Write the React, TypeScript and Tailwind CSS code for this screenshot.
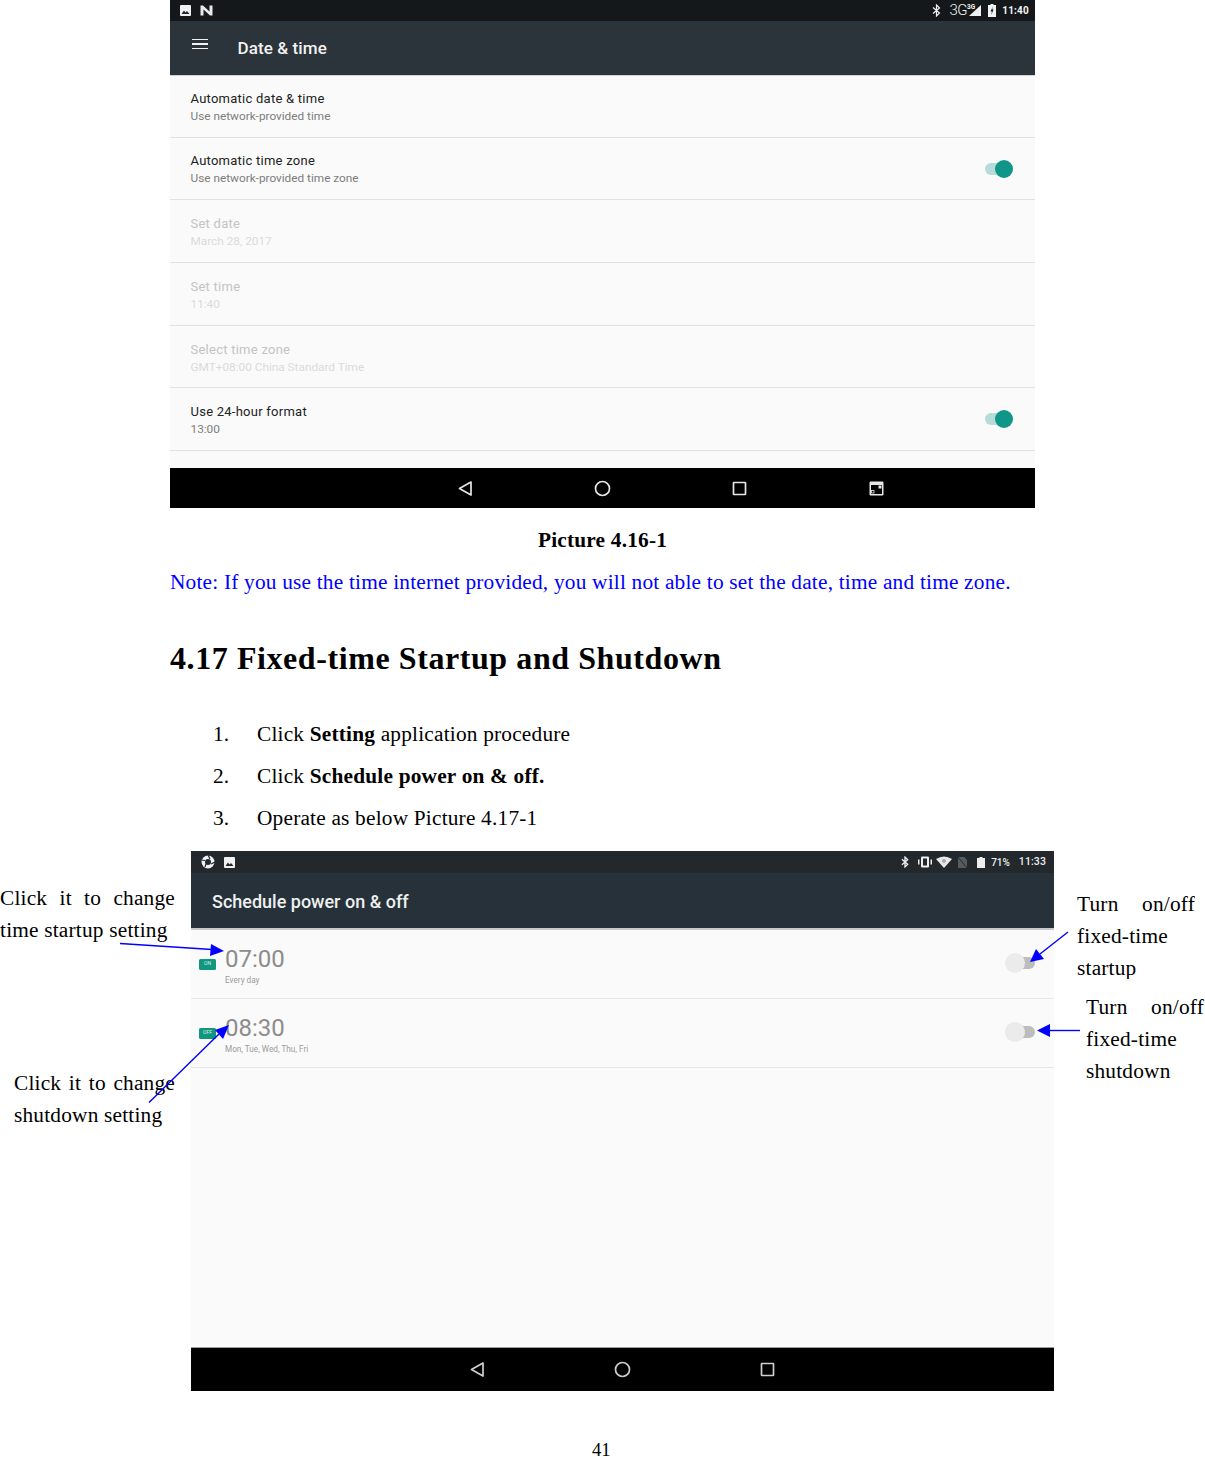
import React from "react";

// --- Shared bits ---

const ROBOTO = "font-['Roboto',sans-serif]";

const NavIcons = ({ extra, size = 17 }: { extra?: boolean; size?: number }) => (
	<>
		<svg width={size} height={size} viewBox="0 0 17 17" fill="none" stroke="currentColor" strokeWidth="1.7" strokeLinejoin="round">
			<path d="M14 2 L2.5 8.5 L14 15 Z" />
		</svg>
		<svg width={size} height={size} viewBox="0 0 17 17" fill="none" stroke="currentColor" strokeWidth="1.7">
			<circle cx="8.5" cy="8.5" r="7" />
		</svg>
		<svg width={size} height={size} viewBox="0 0 17 17" fill="none" stroke="currentColor" strokeWidth="1.7" strokeLinejoin="round">
			<rect x="2.5" y="2.5" width="12" height="12" rx="0.5" />
		</svg>
		{extra && (
			<svg width={size} height={size} viewBox="0 0 17 17" fill="none">
				<rect x="1.5" y="1.5" width="14" height="14" rx="1.2" fill="currentColor" />
				<rect x="3" y="5" width="11" height="9" fill="#000" />
				<rect x="10.5" y="5.5" width="3" height="3" fill="currentColor" />
				<rect x="3.5" y="10.5" width="2.5" height="2.5" stroke="currentColor" strokeWidth="0.8" />
			</svg>
		)}
	</>
);

const PictureIcon = () => (
	<svg width="11" height="11" viewBox="0 0 11 11">
		<rect width="11" height="11" rx="1" fill="#f1f1f1" />
		<path d="M1.5 9 L4 5.5 L5.5 7.5 L7 6 L9.5 9 Z" fill="#23282c" />
	</svg>
);

const Toggle = () => (
	<div className="relative h-[20px] w-[28px]">
		<div className="absolute top-[4px] left-0 h-[12px] w-[24px] rounded-full bg-[#b5dcd8]" />
		<div className="absolute top-[1px] right-0 h-[18px] w-[18px] rounded-full bg-[#0f9688]" />
	</div>
);

const OffToggle = () => (
	<div className="relative -mt-[2px] h-[20px] w-[30px]">
		<div className="absolute top-[4px] right-0 h-[12px] w-[22px] rounded-full bg-[#bdbdbd]" />
		<div className="absolute top-0 left-0 h-[20px] w-[20px] rounded-full bg-[#ebebeb]" />
	</div>
);

const SettingRow = ({
	title,
	sub,
	disabled,
	toggle,
	height,
	low,
}: {
	title: string;
	sub: string;
	disabled?: boolean;
	toggle?: boolean;
	height: string;
	low?: boolean;
}) => (
	<div className={`flex ${height} items-center justify-between border-b border-[#e2e2e2] pr-[22px] pl-[20.5px]`}>
		<div className={low ? "pt-[3px]" : "pt-[1px]"}>
			<div className={`text-[13px] leading-[18px] tracking-[0.25px] ${disabled ? "text-[#c4c4c4]" : "text-[#222222]"}`}>{title}</div>
			<div className={`text-[11.8px] leading-[17px] ${disabled ? "text-[#dadada]" : "text-[#7d7d7d]"}`}>{sub}</div>
		</div>
		{toggle && <Toggle />}
	</div>
);

const ScheduleRow = ({ badge, time, days }: { badge: string; time: string; days: string }) => (
	<div className="flex h-[69px] items-center justify-between border-b border-[#e8e8e8] pr-[19px] pl-[8px]">
		<div className="flex items-center">
			<div className="mr-[9px] flex h-[11px] w-[17px] items-center justify-center rounded-[1.5px] bg-[#12977f] text-[5px] text-[#d4efe9]">{badge}</div>
			<div className="pt-[1px]">
				<div className="text-[24px] leading-[30px] text-[#8c8c8c]">{time}</div>
				<div className="text-[8.2px] leading-[12px] text-[#9a9a9a]">{days}</div>
			</div>
		</div>
		<OffToggle />
	</div>
);

const Callout = ({ lines, className }: { lines: string[]; className: string }) => (
	<div className={`absolute text-[21.33px] leading-[32px] tracking-[0.2px] text-black ${className}`}>
		{lines.map((l, i) => (
			<div key={i} className={i === 0 ? "[text-align-last:justify]" : ""}>
				{l}
			</div>
		))}
	</div>
);

// --- Page ---

export default function App() {
	return (
		<div className="relative h-[1457px] w-[1205px] overflow-hidden bg-white font-['Liberation_Serif',serif] text-black">
			{/* Picture 4.16-1 */}
			<div className={`ml-[170px] w-[865px] bg-[#fafafa] ${ROBOTO}`}>
				<div className="flex h-[21px] items-center justify-between bg-[#15181b] pr-[6px] pl-[10px] text-[#f2f2f2]">
					<div className="flex items-center gap-[9px]">
						<PictureIcon />
						<svg width="13" height="11" viewBox="0 0 13 11" fill="#e8e8e8">
							<path d="M0.5 0.5 L3 0.5 L9.5 6.5 L9.5 0.5 L12.5 0.5 L12.5 10.5 L10 10.5 L3.5 4.5 L3.5 10.5 L0.5 10.5 Z" />
						</svg>
					</div>
					<div className="flex items-center">
						<svg width="9" height="13" viewBox="0 0 9 13" fill="none" stroke="#eeeeee" strokeWidth="1.2" className="mr-[8px]">
							<path d="M1 3.5 L7.5 9 L4.5 12 L4.5 1 L7.5 4 L1 9.5" />
						</svg>
						<span className="text-[15px] font-light tracking-[-0.5px]">3G</span>
						<span className="mb-[6px] text-[6.5px] font-bold">3G</span>
						<svg width="12" height="11" viewBox="0 0 12 11" className="mr-[7px] -ml-[6px]">
							<path d="M12 0 L12 11 L0 11 Z" fill="#f0f0f0" />
						</svg>
						<svg width="8" height="13" viewBox="0 0 8 13" className="mr-[6px]">
							<path d="M2.5 0 H5.5 V1 H8 V13 H0 V1 H2.5 Z" fill="#f2f2f2" />
							<path d="M4.8 2.5 L2.5 7.5 H4 L3.2 11 L5.6 5.5 H4.2 Z" fill="#15181b" />
						</svg>
						<span className="text-[10px] font-bold tracking-[0.2px]">11:40</span>
					</div>
				</div>
				<div className="flex h-[55px] items-center border-b border-[#cfd2d4] bg-[#2a343a] pl-[22px] text-white">
					<div className="mb-[8px] flex w-[15.5px] flex-col gap-[3px]">
						<div className="h-[1.5px] bg-[#f2f2f2]" />
						<div className="h-[1.5px] bg-[#f2f2f2]" />
						<div className="h-[1.5px] bg-[#f2f2f2]" />
					</div>
					<div className="mt-[2px] ml-[30px] text-[17px] font-medium tracking-[0.1px] text-[#f2f2f2]">Date &amp; time</div>
				</div>
				<SettingRow height="h-[62px]" title="Automatic date & time" sub="Use network-provided time" />
				<SettingRow height="h-[62px]" title="Automatic time zone" sub="Use network-provided time zone" toggle />
				<SettingRow height="h-[63px]" title="Set date" sub="March 28, 2017" disabled low />
				<SettingRow height="h-[63px]" title="Set time" sub="11:40" disabled low />
				<SettingRow height="h-[62px]" title="Select time zone" sub="GMT+08:00 China Standard Time" disabled low />
				<SettingRow height="h-[63px]" title="Use 24-hour format" sub="13:00" toggle low />
				<div className="h-[17px]" />
				<div className="flex h-[40px] items-center gap-[120px] bg-black pl-[287px] text-[#e6e6e6]">
					<NavIcons extra />
				</div>
			</div>

			{/* Text */}
			<div className="pt-[17px] text-center text-[21.33px] leading-[30px] font-bold tracking-[0.2px]">Picture 4.16-1</div>
			<div className="mt-[12px] pl-[170px] text-[21.33px] leading-[30px] tracking-[0.2px] whitespace-nowrap text-[#0000ff]">
				Note: If you use the time internet provided, you will not able to set the date, time and time zone.
			</div>
			<h2 className="mt-[40px] pl-[170px] text-[32px] leading-[42px] font-bold tracking-[0.58px] whitespace-nowrap">4.17 Fixed-time Startup and Shutdown</h2>
			<ol className="mt-[40px] flex flex-col gap-[12px] pl-[213px] text-[21.33px] leading-[30px] tracking-[0.2px]">
				<li className="flex">
					<span className="w-[44px]">1.</span>
					<span>
						Click <b>Setting</b> application procedure
					</span>
				</li>
				<li className="flex">
					<span className="w-[44px]">2.</span>
					<span>
						Click <b>Schedule power on &amp; off.</b>
					</span>
				</li>
				<li className="flex">
					<span className="w-[44px]">3.</span>
					<span>Operate as below Picture 4.17-1</span>
				</li>
			</ol>

			{/* Picture 4.17-1 */}
			<div className={`mt-[18px] ml-[191px] w-[863px] bg-[#fafafa] ${ROBOTO}`}>
				<div className="flex h-[22px] items-center justify-between bg-[#23282c] pr-[8px] pl-[10px] text-[#eeeeee]">
					<div className="flex items-center gap-[9px]">
						<svg width="14" height="14" viewBox="0 0 14 14">
							<circle cx="7" cy="7" r="6.5" fill="#f2f2f2" />
							<circle cx="7" cy="7" r="3" fill="#23282c" />
							<path d="M7 0 L9 4 M14 7 L10 9 M4 12 L5 9 M0.5 5 L4 5.5" stroke="#23282c" strokeWidth="1.2" />
						</svg>
						<PictureIcon />
					</div>
					<div className="flex items-center">
						<svg width="8" height="12" viewBox="0 0 9 13" fill="none" stroke="#eeeeee" strokeWidth="1.5" className="mr-[8px]">
							<path d="M1 3.5 L7.5 9 L4.5 12 L4.5 1 L7.5 4 L1 9.5" />
						</svg>
						<svg width="16" height="12" viewBox="0 0 16 12" className="mr-[3px]">
							<rect x="4" y="0.5" width="8" height="11" rx="1" fill="#eeeeee" />
							<rect x="6" y="2.5" width="4" height="7" fill="#23282c" />
							<rect x="1" y="3.5" width="1.5" height="5" fill="#eeeeee" />
							<rect x="13.5" y="3.5" width="1.5" height="5" fill="#eeeeee" />
						</svg>
						<svg width="16" height="12" viewBox="0 0 16 12" className="mr-[6px]">
							<path d="M0 3 Q8 -2 16 3 L8 12 Z" fill="#e8e8e8" />
							<circle cx="8" cy="5" r="2" fill="#a8a8a8" />
						</svg>
						<svg width="9" height="11" viewBox="0 0 9 11" className="mr-[10px]">
							<path d="M0 0 H6 L9 3 V11 H0 Z" fill="#565b5e" />
							<path d="M0 0 L9 11" stroke="#23282c" strokeWidth="1" />
						</svg>
						<svg width="8" height="11" viewBox="0 0 8 11" className="mr-[6px]">
							<path d="M2.5 0 H5.5 V1 H8 V11 H0 V1 H2.5 Z" fill="#eeeeee" />
						</svg>
						<span className="mr-[9px] text-[10px] font-medium">71%</span>
						<span className="text-[10.5px] font-medium tracking-[0.1px]">11:33</span>
					</div>
				</div>
				<div className="flex h-[57px] items-center border-b-2 border-[#c7c9cb] bg-[#263139] pt-[1px] pl-[21px] text-[18px] font-medium text-[#eef0f0]">Schedule power on &amp; off</div>
				<ScheduleRow badge="ON" time="07:00" days="Every day" />
				<ScheduleRow badge="OFF" time="08:30" days="Mon, Tue, Wed, Thu, Fri" />
				<div className="h-[280px] border-b border-[#9a9a9a]" />
				<div className="flex h-[43px] items-center gap-[128px] bg-black pl-[278px] text-[#cfcfcf]">
					<NavIcons size={17} />
				</div>
			</div>

			{/* Callouts */}
			<Callout className="top-[882px] left-0 w-[175px]" lines={["Click it to change", "time startup setting"]} />
			<Callout className="top-[1067px] left-[14px] w-[161px]" lines={["Click it to change", "shutdown setting"]} />
			<Callout className="top-[888px] left-[1077px] h-[91px] w-[118px] overflow-hidden" lines={["Turn on/off", "fixed-time", "startup"]} />
			<Callout className="top-[991px] left-[1086px] w-[118px]" lines={["Turn on/off", "fixed-time", "shutdown"]} />
			<div className="absolute top-[1442px] left-[592px] text-[18.67px] leading-[16px]">41</div>

			{/* Arrows */}
			<svg className="absolute top-0 left-0" width="1205" height="1457" viewBox="0 0 1205 1457" fill="#0000ff" stroke="none">
				<path d="M120 943.5 L212 949.5" stroke="#0000ff" strokeWidth="1.4" fill="none" />
				<path d="M224 951 L211 944 L210 956 Z" />
				<path d="M149 1102.5 L219 1034" stroke="#0000ff" strokeWidth="1.4" fill="none" />
				<path d="M229 1025 L215 1030 L223 1039 Z" />
				<path d="M1068 932 L1040 954" stroke="#0000ff" strokeWidth="1.4" fill="none" />
				<path d="M1030 962 L1036 949 L1044 959 Z" />
				<path d="M1080 1030.5 L1048 1030.5" stroke="#0000ff" strokeWidth="1.4" fill="none" />
				<path d="M1037 1030.5 L1050 1024 L1050 1037 Z" />
			</svg>
		</div>
	);
}
